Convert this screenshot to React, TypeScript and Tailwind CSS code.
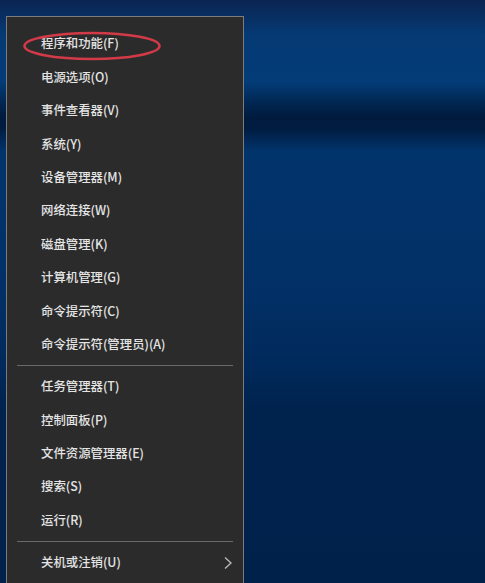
const groups: string[][] = [
  [
    "程序和功能(F)",
    "电源选项(O)",
    "事件查看器(V)",
    "系统(Y)",
    "设备管理器(M)",
    "网络连接(W)",
    "磁盘管理(K)",
    "计算机管理(G)",
    "命令提示符(C)",
    "命令提示符(管理员)(A)",
  ],
  ["任务管理器(T)", "控制面板(P)", "文件资源管理器(E)", "搜索(S)", "运行(R)"],
  ["关机或注销(U)"],
];

function MenuItem({ label, submenu }: { label: string; submenu?: boolean }) {
  return (
    <div className="h-[33.4px] flex items-center justify-between pl-[34px] pr-[10px] text-[12.4px] font-medium text-[#e4e4e4]">
      <span>{label}</span>
      {submenu && (
        <svg width="10" height="14" viewBox="0 0 10 14" fill="none">
          <path d="M2 1.5 L8 7 L2 12.5" stroke="#bdbdbd" strokeWidth="1.3" />
        </svg>
      )}
    </div>
  );
}

export default function App() {
  return (
    <div
      className="w-[485px] h-[583px] overflow-hidden pt-[16px] pl-[6px] bg-[linear-gradient(180deg,#0b2452_0%,#053a74_6%,#033c78_14%,#012a58_17%,#001b3e_20%,#001c40_22%,#02346c_26%,#023066_50%,#012a5c_62%,#00234e_70%,#00214a_100%)]"
      style={{ fontFamily: '"Noto Sans CJK SC", "Noto Sans", sans-serif' }}
    >
      <div className="relative w-[238px] h-[600px] bg-[#2b2b2b] border border-[#7c7c7c] pt-[10px]">
        {groups.map((items, gi) => (
          <div key={gi}>
            {gi > 0 && (
              <div className="h-[9px] flex items-center px-[10px]">
                <div className="h-px w-full bg-[#6a6a6a]" />
              </div>
            )}
            {items.map((label) => (
              <MenuItem key={label} label={label} submenu={gi === 2} />
            ))}
          </div>
        ))}
        <svg
          className="absolute left-[15px] top-[13px] pointer-events-none"
          width="140"
          height="32"
          viewBox="0 0 140 32"
        >
          <ellipse cx="70" cy="16" rx="67.5" ry="13" fill="none" stroke="#d23a48" strokeWidth="2.6" />
        </svg>
      </div>
    </div>
  );
}
